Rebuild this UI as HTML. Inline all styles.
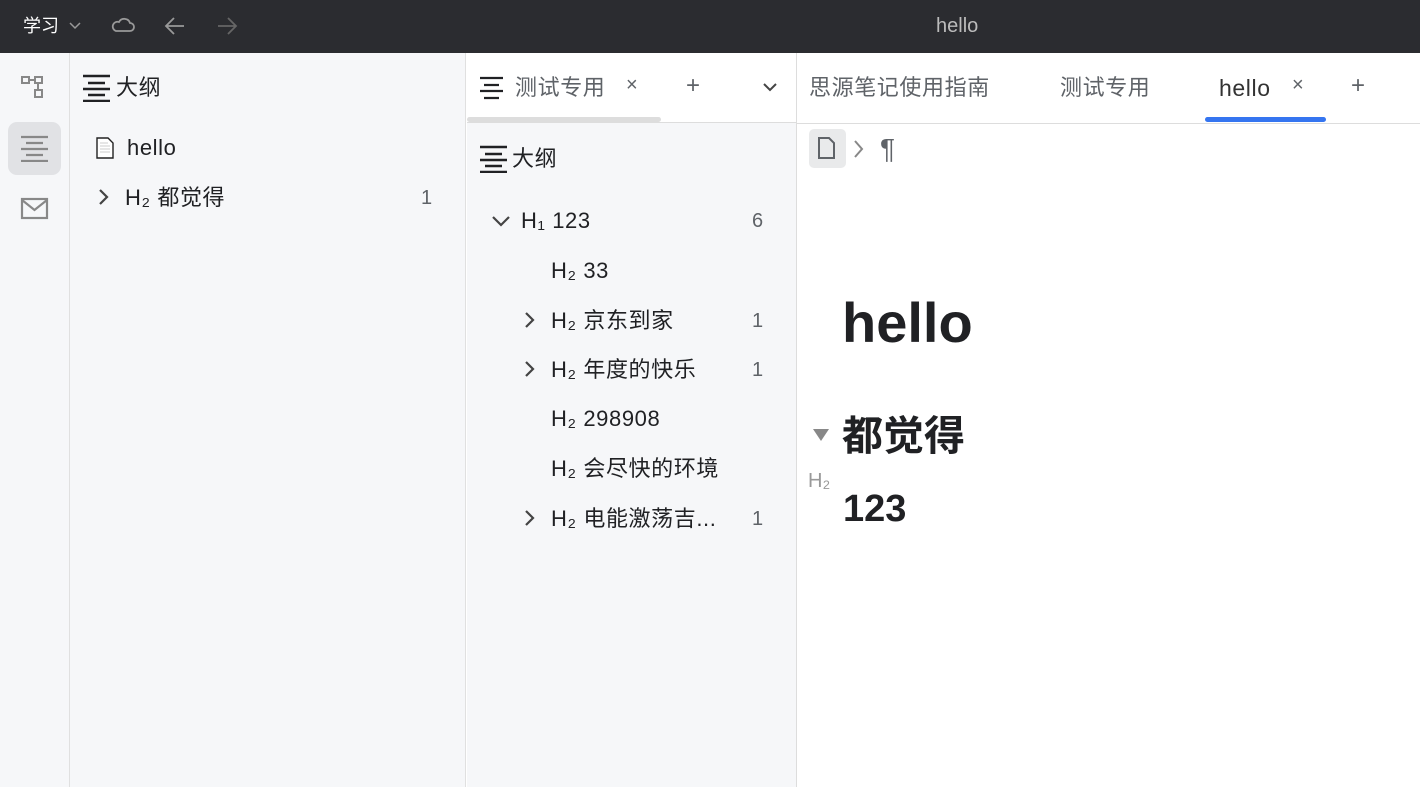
<!DOCTYPE html>
<html><head><meta charset="utf-8"><style>
*{margin:0;padding:0;box-sizing:border-box}
body{width:1420px;height:787px;overflow:hidden;font-family:"Liberation Sans","Noto Sans CJK SC",sans-serif;background:#fff;position:relative;color:#202124}
.a{position:absolute;white-space:nowrap}
.top{left:0;top:0;width:1420px;height:53px;background:#2b2c30}
.t{font-size:22px;line-height:30px;letter-spacing:0.6px}
.g{color:#5f6368}
</style></head><body>
<div class="a top"></div>
<div class="a" style="left:23px;top:14px;color:#fff;font-size:18px;line-height:24px">学习</div>
<svg class="a" style="left:68px;top:19px" width="14" height="14"><path d="M2 4l5 5 5-5" stroke="#999" stroke-width="1.5" fill="none"/></svg>
<svg class="a" style="left:110px;top:14px" width="26" height="22"><path d="M6 17h14a4 4 0 0 0 0-8 6 6 0 0 0-11-1 4.5 4.5 0 0 0-3 9z" stroke="#999" stroke-width="1.8" fill="none"/></svg>
<svg class="a" style="left:163px;top:14px" width="24" height="24"><path d="M21 12H3M11 4l-8 8 8 8" stroke="#999" stroke-width="1.8" fill="none"/></svg>
<svg class="a" style="left:215px;top:14px" width="24" height="24"><path d="M3 12h18M13 4l8 8-8 8" stroke="#666" stroke-width="1.8" fill="none"/></svg>
<div class="a" style="left:936px;top:13px;color:#bbb;font-size:20px;line-height:26px">hello</div>

<div class="a" style="left:0;top:53px;width:466px;height:734px;background:#f6f7f9;border-right:1px solid #e0e0e0"></div>
<div class="a" style="left:467px;top:123px;width:329px;height:664px;background:#f6f7f9"></div>
<div class="a" style="left:69px;top:53px;width:1px;height:734px;background:#e0e0e0"></div>
<svg class="a" style="left:21px;top:75px" width="28" height="26" fill="none" stroke="#888" stroke-width="2"><rect x="1" y="2" width="7" height="6"/><rect x="14" y="2" width="7" height="6"/><rect x="14" y="15" width="7" height="7"/><path d="M8 5h6M17 8v7"/></svg>
<div class="a" style="left:8px;top:122px;width:53px;height:53px;background:#e1e2e5;border-radius:9px"></div>
<svg class="a" style="left:20px;top:134px" width="28" height="28" stroke="#888" stroke-width="2.2"><path d="M1 3h27M6 9h17M1 15h27M6 21h17M1 27h27"/></svg>
<svg class="a" style="left:20px;top:197px" width="30" height="24" fill="none" stroke="#888" stroke-width="2.2"><rect x="2" y="2" width="25" height="19"/><path d="M2 3l12.5 10L27 3"/></svg>

<svg class="a" style="left:82px;top:74px" width="28" height="28" stroke="#202124" stroke-width="2.5"><path d="M1 2h27M6 9h17M1 15h27M6 21h17M1 27h27"/></svg>
<div class="a t" style="left:116px;top:73px">大纲</div>
<svg class="a" style="left:96px;top:137px" width="18" height="22"><path d="M1 1h11l5 5v15H1z" fill="#fff" stroke="#222" stroke-width="1.4"/><path d="M4 6h8M4 9h10M4 12h10M4 15h10" stroke="#ccc"/></svg>
<div class="a t" style="left:127px;top:133px">hello</div>
<svg class="a" style="left:97px;top:188px" width="14" height="18"><path d="M3 2l7 7-7 7" stroke="#444" stroke-width="2.2" fill="none"/></svg>
<div class="a t" style="left:125px;top:183px">H₂ 都觉得</div>
<div class="a t g" style="left:421px;top:183px;font-size:20px">1</div>

<div class="a" style="left:467px;top:53px;width:329px;height:70px;background:#fff;border-bottom:1px solid #ddd"></div>
<div class="a" style="left:467px;top:117px;width:194px;height:5px;background:#ddd;border-radius:3px"></div>
<svg class="a" style="left:479px;top:76px" width="25" height="24" stroke="#202124" stroke-width="2.2"><path d="M1 2h23M5 9h15M1 15h23M5 22h15"/></svg>
<div class="a t g" style="left:515px;top:73px">测试专用</div>
<div class="a g" style="left:626px;top:74px;font-size:20px">×</div>
<div class="a g" style="left:686px;top:72px;font-size:24px">+</div>
<svg class="a" style="left:762px;top:81px" width="16" height="12"><path d="M2 3l6 6 6-6" stroke="#444" stroke-width="2" fill="none"/></svg>
<svg class="a" style="left:479px;top:145px" width="28" height="28" stroke="#202124" stroke-width="2.5"><path d="M1 2h27M6 9h17M1 15h27M6 21h17M1 27h27"/></svg>
<div class="a t" style="left:512px;top:144px">大纲</div>
<svg class="a" style="left:491px;top:214px" width="20" height="14"><path d="M2 3l8 8 8-8" stroke="#444" stroke-width="2.2" fill="none"/></svg>
<div class="a t" style="left:521px;top:206px">H₁ 123</div><div class="a t g" style="left:752px;top:206px;font-size:20px">6</div>
<div class="a t" style="left:551px;top:256px">H₂ 33</div>
<svg class="a" style="left:523px;top:311px" width="14" height="18"><path d="M3 2l7 7-7 7" stroke="#444" stroke-width="2.2" fill="none"/></svg>
<div class="a t" style="left:551px;top:306px">H₂ 京东到家</div><div class="a t g" style="left:752px;top:306px;font-size:20px">1</div>
<svg class="a" style="left:523px;top:360px" width="14" height="18"><path d="M3 2l7 7-7 7" stroke="#444" stroke-width="2.2" fill="none"/></svg>
<div class="a t" style="left:551px;top:355px">H₂ 年度的快乐</div><div class="a t g" style="left:752px;top:355px;font-size:20px">1</div>
<div class="a t" style="left:551px;top:404px">H₂ 298908</div>
<div class="a t" style="left:551px;top:454px">H₂ 会尽快的环境</div>
<svg class="a" style="left:523px;top:509px" width="14" height="18"><path d="M3 2l7 7-7 7" stroke="#444" stroke-width="2.2" fill="none"/></svg>
<div class="a t" style="left:551px;top:504px">H₂ 电能激荡吉...</div><div class="a t g" style="left:752px;top:504px;font-size:20px">1</div>

<div class="a" style="left:796px;top:53px;width:1px;height:734px;background:#ddd"></div>
<div class="a" style="left:797px;top:123px;width:623px;height:1px;background:#ddd"></div>
<div class="a t g" style="left:809px;top:73px">思源笔记使用指南</div>
<div class="a t g" style="left:1060px;top:73px">测试专用</div>
<div class="a t" style="left:1219px;top:73px;color:#333;font-size:23px">hello</div>
<div class="a g" style="left:1292px;top:74px;font-size:20px">×</div>
<div class="a g" style="left:1351px;top:72px;font-size:24px">+</div>
<div class="a" style="left:1205px;top:117px;width:121px;height:5px;background:#3575f0;border-radius:3px"></div>
<div class="a" style="left:809px;top:129px;width:37px;height:39px;background:#e9eaeb;border-radius:5px"></div>
<svg class="a" style="left:817px;top:137px" width="20" height="24"><path d="M2 1h10l5 5v15H2z" fill="none" stroke="#5f6368" stroke-width="2"/></svg>
<svg class="a" style="left:853px;top:139px" width="12" height="20"><path d="M2 2l7 8-7 8" stroke="#888" stroke-width="2" fill="none"/></svg>
<div class="a" style="left:880px;top:132px;font-size:28px;color:#5f6368;line-height:34px">¶</div>
<div class="a" style="left:842px;top:288px;font-size:56px;font-weight:bold;line-height:70px">hello</div>
<svg class="a" style="left:812px;top:428px" width="18" height="14"><path d="M1 1h16L9 13z" fill="#888"/></svg>
<div class="a" style="left:842px;top:410px;font-size:41px;font-weight:bold;line-height:52px">都觉得</div>
<div class="a" style="left:808px;top:470px;font-size:20px;color:#999">H₂</div>
<div class="a" style="left:843px;top:485px;font-size:38px;font-weight:bold;line-height:48px">123</div>
</body></html>
